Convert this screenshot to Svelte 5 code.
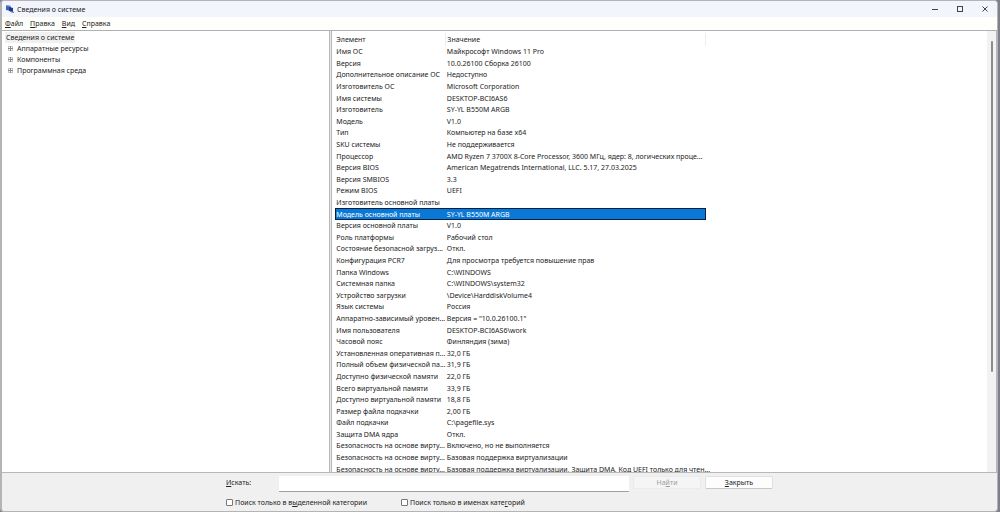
<script lang="ts">
  type Row = [name: string, value: string];

  const menu = [
    { key: 'Ф', rest: 'айл' },
    { key: 'П', rest: 'равка' },
    { key: 'В', rest: 'ид' },
    { key: 'С', rest: 'правка' },
  ];

  const categories = ['Аппаратные ресурсы', 'Компоненты', 'Программная среда'];

  const rows: Row[] = [
    ['Имя ОС', 'Майкрософт Windows 11 Pro'],
    ['Версия', '10.0.26100 Сборка 26100'],
    ['Дополнительное описание ОС', 'Недоступно'],
    ['Изготовитель ОС', 'Microsoft Corporation'],
    ['Имя системы', 'DESKTOP-BCI6AS6'],
    ['Изготовитель', 'SY-YL B550M ARGB'],
    ['Модель', 'V1.0'],
    ['Тип', 'Компьютер на базе x64'],
    ['SKU системы', 'Не поддерживается'],
    ['Процессор', 'AMD Ryzen 7 3700X 8-Core Processor, 3600 МГц, ядер: 8, логических проце...'],
    ['Версия BIOS', 'American Megatrends International, LLC. 5.17, 27.03.2025'],
    ['Версия SMBIOS', '3.3'],
    ['Режим BIOS', 'UEFI'],
    ['Изготовитель основной платы', ''],
    ['Модель основной платы', 'SY-YL B550M ARGB'],
    ['Версия основной платы', 'V1.0'],
    ['Роль платформы', 'Рабочий стол'],
    ['Состояние безопасной загруз...', 'Откл.'],
    ['Конфигурация PCR7', 'Для просмотра требуется повышение прав'],
    ['Папка Windows', 'C:\\WINDOWS'],
    ['Системная папка', 'C:\\WINDOWS\\system32'],
    ['Устройство загрузки', '\\Device\\HarddiskVolume4'],
    ['Язык системы', 'Россия'],
    ['Аппаратно-зависимый уровен...', 'Версия = "10.0.26100.1"'],
    ['Имя пользователя', 'DESKTOP-BCI6AS6\\work'],
    ['Часовой пояс', 'Финляндия (зима)'],
    ['Установленная оперативная п...', '32,0 ГБ'],
    ['Полный объем физической па...', '31,9 ГБ'],
    ['Доступно физической памяти', '22,0 ГБ'],
    ['Всего виртуальной памяти', '33,9 ГБ'],
    ['Доступно виртуальной памяти', '18,8 ГБ'],
    ['Размер файла подкачки', '2,00 ГБ'],
    ['Файл подкачки', 'C:\\pagefile.sys'],
    ['Защита DMA ядра', 'Откл.'],
    ['Безопасность на основе вирту...', 'Включено, но не выполняется'],
    ['Безопасность на основе вирту...', 'Базовая поддержка виртуализации'],
    ['Безопасность на основе вирту...', 'Базовая поддержка виртуализации, Защита DMA, Код UEFI только для чтен...'],
  ];

  let selected = $state(14);
  let query = $state('');
</script>

<div class="window">
  <header class="title-bar">
    <svg class="app-icon" viewBox="0 0 10 10" aria-hidden="true">
      <path d="M1 1l5 1v5l-5-1z" fill="#3c63b8" />
      <path d="M1 1l5 1v1l-5-1z" fill="#8aa4d8" />
      <path d="M4 3l4 1v4l-4-1z" fill="#1d3c8c" />
      <path d="M6 7l3 1v1l-4-1z" fill="#5f6f8f" />
    </svg>
    <h1>Сведения о системе</h1>
    <div class="window-buttons">
      <button aria-label="Свернуть">
        <svg viewBox="0 0 8 8"><path d="M1 4.500h6" /></svg>
      </button>
      <button aria-label="Развернуть">
        <svg viewBox="0 0 8 8"><rect x="1.500" y="1.500" width="5" height="5" /></svg>
      </button>
      <button aria-label="Закрыть окно">
        <svg viewBox="0 0 8 8"><path d="M1.500 1.500l5 5m0-5l-5 5" /></svg>
      </button>
    </div>
  </header>

  <nav class="menu-bar">
    {#each menu as item}
      <button><u>{item.key}</u>{item.rest}</button>
    {/each}
  </nav>

  <main class="panes">
    <div class="tree">
      <button class="root">Сведения о системе</button>
      <ul>
        {#each categories as category}
          <li>
            <button>
              <svg viewBox="0 0 7 7" aria-hidden="true">
                <rect x="1.500" y="1.500" width="4" height="4" fill="#fff" stroke="#c4c4c4" />
                <path d="M1 3.500h5M3.500 1v5" stroke="#8a8a8a" />
              </svg>
              {category}
            </button>
          </li>
        {/each}
      </ul>
    </div>

    <div class="details">
      <div class="list">
        <table>
          <thead>
            <tr><th class="name">Элемент</th><th>Значение</th></tr>
          </thead>
          <tbody>
            {#each rows as [name, value], i}
              <tr class:selected={i === selected} onclick={() => (selected = i)}>
                <td>{name}</td>
                <td>{value}</td>
              </tr>
            {/each}
          </tbody>
        </table>
      </div>
      <div class="scrollbar"><div class="thumb"></div></div>
    </div>
  </main>

  <footer class="find">
    <label class="find-label" for="query"><u>И</u>скать:</label>
    <div class="find-row">
      <input id="query" type="text" bind:value={query} />
      <button disabled={!query}>На<u>й</u>ти</button>
      <button><u>З</u>акрыть</button>
    </div>
    <div class="options">
      <label><input type="checkbox" /><span>Поиск только в в<u>ы</u>деленной категории</span></label>
      <label><input type="checkbox" /><span>Поиск только в именах кате<u>г</u>орий</span></label>
    </div>
  </footer>
</div>

<style>
  :global(body) {
    background: #7d8088;
  }

  .window {
    display: flex;
    flex-direction: column;
    box-sizing: border-box;
    height: 100vh;
    margin-right: 2px;
    border: 1px solid #b4b4b8;
    border-width: 1px 1px 1px 2px;
    border-radius: 4px;
    overflow: hidden;
    background: #f0f0f0;
    color: #222;
    font: 7px/11px 'Noto Sans', 'Open Sans', sans-serif;
  }

  button,
  input {
    font: inherit;
    color: inherit;
  }

  button {
    padding: 0;
    border: 0;
    background: none;
    white-space: nowrap;
  }

  u {
    text-underline-offset: 1px;
  }

  .title-bar {
    display: flex;
    align-items: center;
    height: 16px;
    padding-left: 3px;
    background: #f3f5fd;
  }

  .app-icon {
    width: 10px;
    height: 10px;
  }

  h1 {
    margin: 0 auto 0 2px;
    font-size: 7px;
    font-weight: 400;
  }

  .window-buttons {
    display: flex;
  }

  .window-buttons button {
    display: flex;
    justify-content: center;
    width: 25px;
  }

  .window-buttons svg {
    width: 8px;
    height: 8px;
    fill: none;
    stroke: #444;
  }

  .menu-bar {
    display: flex;
    gap: 7px;
    height: 13px;
    padding-left: 3px;
    background: #fefefb;
  }

  .panes {
    display: flex;
    flex: 1;
    min-height: 0;
    border-top: 1px solid #b0b0b4;
    border-bottom: 1px solid #b8b8b8;
    background: #e8e8e8;
    gap: 1px;
  }

  .tree {
    box-sizing: border-box;
    width: 33%;
    padding: 1px 3px;
    border-right: 1px solid #b8b8b8;
    background: #fff;
  }

  .tree button {
    display: flex;
    align-items: center;
    gap: 3px;
    height: 11px;
  }

  .tree .root {
    padding: 0 1px;
    background: #f0f0f0;
  }

  .tree ul {
    margin: 0;
    padding: 0 0 0 2px;
    list-style: none;
  }

  .tree svg {
    width: 7px;
    height: 7px;
  }

  .details {
    display: flex;
    flex: 1;
    min-width: 0;
    border: 1px solid #b8b8b8;
    border-width: 0 1px;
    background: #fff;
  }

  .list {
    flex: 1;
    min-width: 0;
    padding: 2px 2px 0 3px;
    overflow: hidden;
  }

  table {
    width: 371px;
    height: 442px;
    border-collapse: collapse;
    table-layout: fixed;
  }

  th,
  td {
    padding: 0 1px;
    font-weight: 400;
    line-height: 9px;
    text-align: left;
    white-space: nowrap;
  }

  th {
    height: 13px;
    border-right: 1px solid #ececec;
  }

  .name {
    width: 108px;
  }

  .selected {
    outline: 1px solid #06203c;
    outline-offset: -1px;
    background: #0a78d6;
    color: #fff;
  }

  .scrollbar {
    width: 9px;
    background: #f2f2f2;
  }

  .thumb {
    width: 2px;
    height: 75%;
    margin: 10px auto 0;
    border-radius: 1px;
    background: #8c8c8c;
  }

  .find {
    display: grid;
    grid-template-columns: 48px 1fr;
    gap: 5px;
    padding: 3px 224px 3px 224px;
  }

  .find-label {
    padding-top: 1px;
  }

  .find-row {
    display: flex;
    gap: 4px;
  }

  .find-row input {
    flex: 1;
    box-sizing: border-box;
    min-width: 0;
    height: 16px;
    padding: 0 3px;
    border: 0;
    border-bottom: 1px solid #a0a0a0;
    background: #fff;
  }

  .find-row button {
    width: 68px;
    height: 13px;
    border: 1px solid #e0e0e0;
    border-bottom-color: #c8c8c8;
    border-radius: 2px;
    background: #fdfdfd;
  }

  .find-row button:disabled {
    border-color: #ebebeb;
    background: #f5f5f5;
    color: #a0a0a0;
  }

  .options {
    display: flex;
    grid-column: 1 / -1;
    gap: 34px;
  }

  .options label {
    display: flex;
    align-items: center;
    gap: 2px;
    white-space: nowrap;
  }

  .options input {
    appearance: none;
    box-sizing: border-box;
    width: 7px;
    height: 7px;
    margin: 0;
    border: 1px solid #777;
    border-radius: 1px;
    background: #fff;
  }

  .options input:checked {
    background: #0a78d6;
  }
</style>
